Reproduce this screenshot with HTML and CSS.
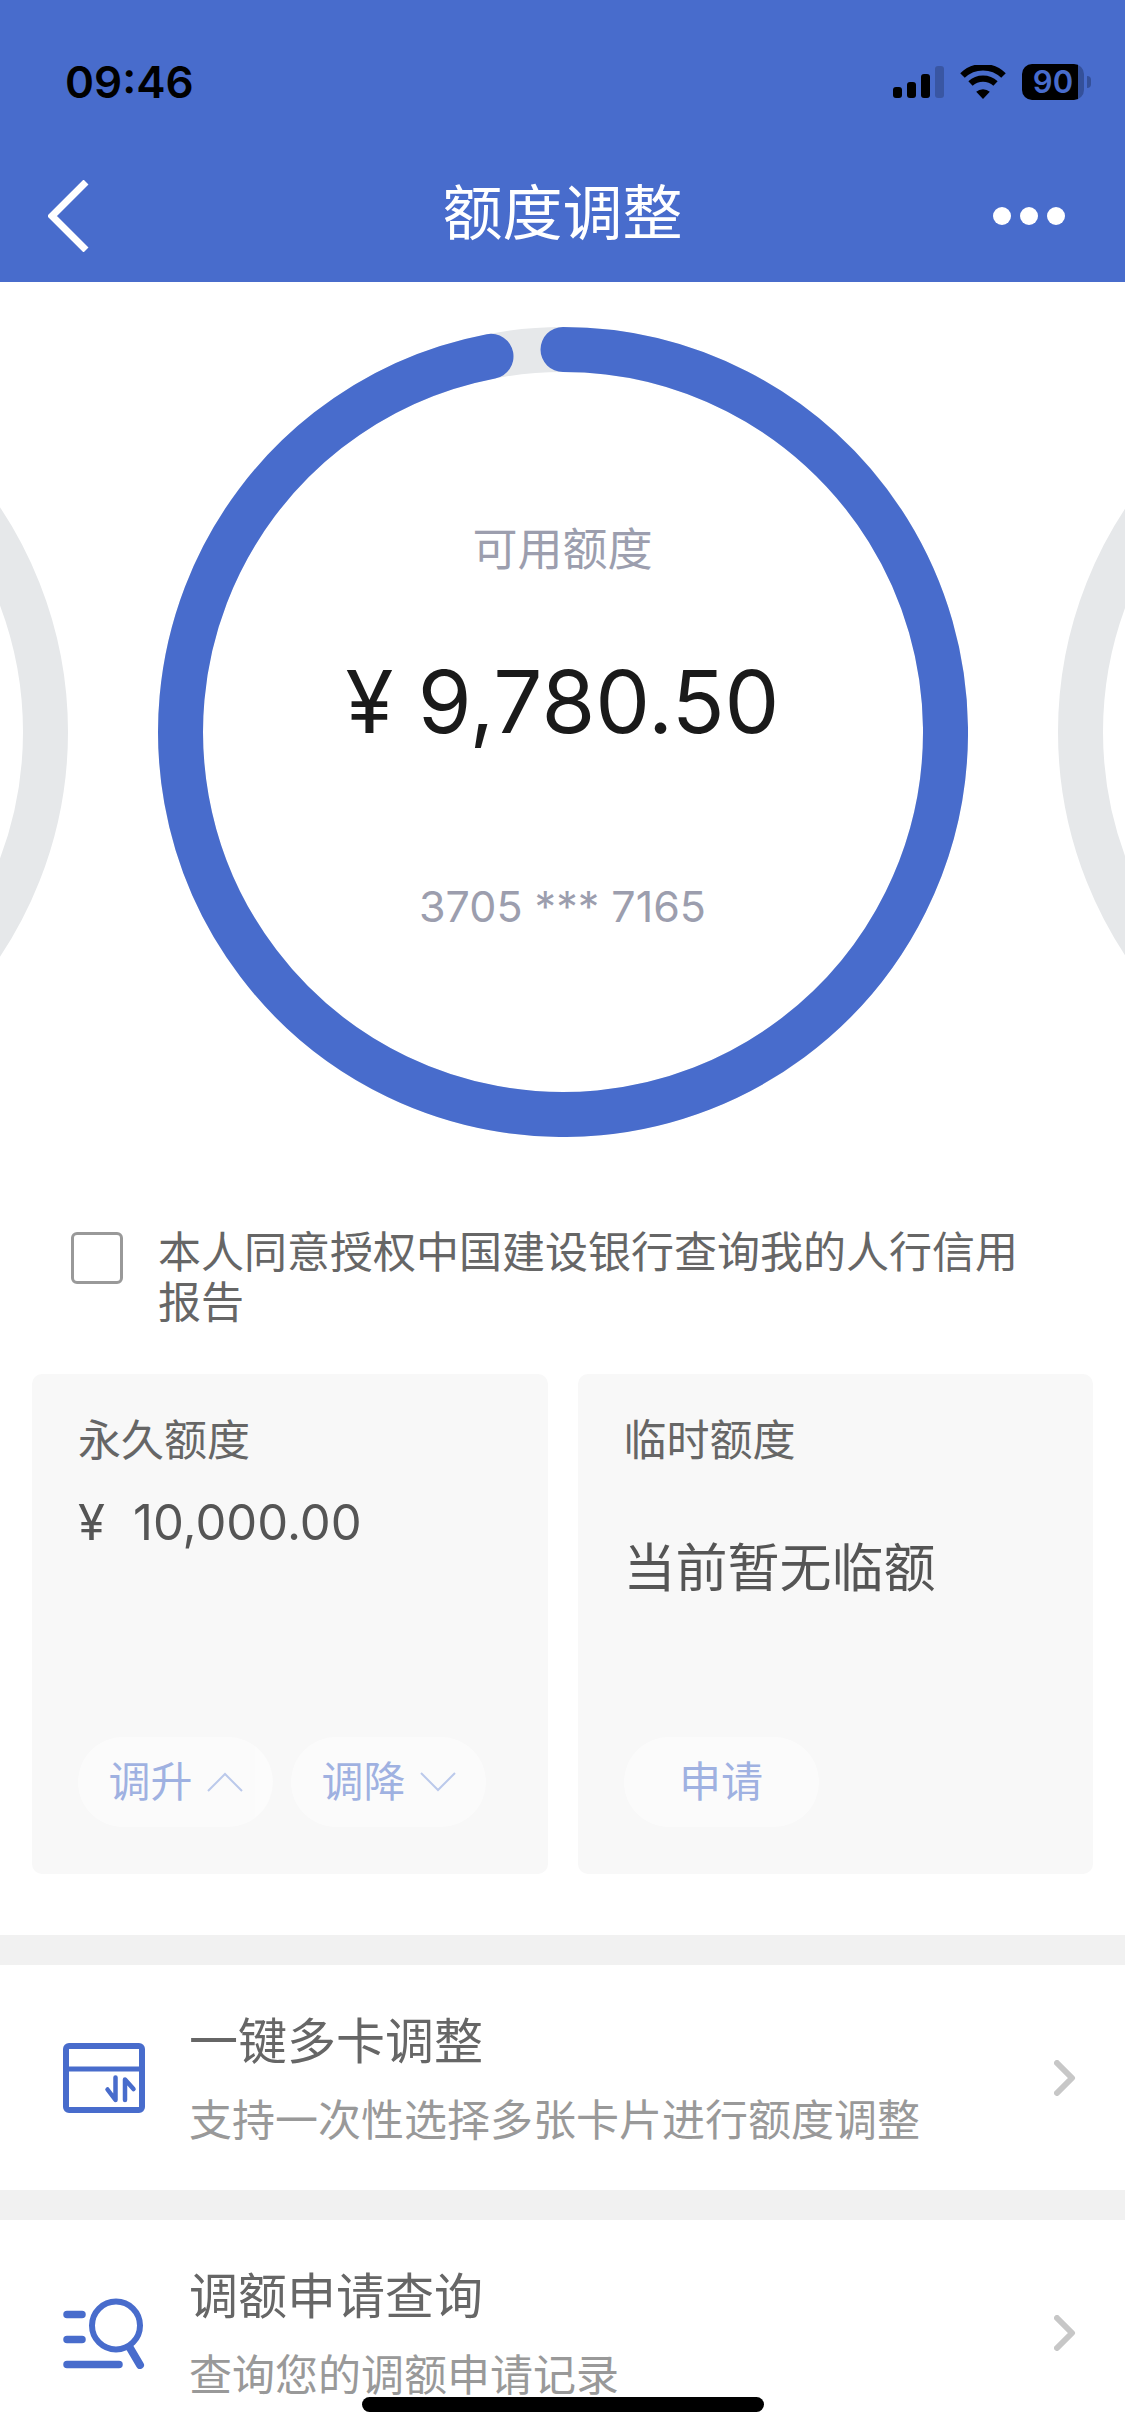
FILE: index.html
```html
<!DOCTYPE html>
<html lang="zh-CN">
<head>
<meta charset="utf-8">
<meta name="viewport" content="width=device-width, initial-scale=1">
<title>额度调整</title>
<link rel="stylesheet" href="styles.css">
</head>
<body>
<div class="app">
  <header class="header">
    <div class="status">
      <span class="status-time">09:46</span>
      <div class="status-icons">
        <svg class="signal" width="51" height="34" viewBox="0 0 51 34" aria-hidden="true">
          <rect x="0" y="22" width="9" height="11" rx="3"/>
          <rect x="14" y="17" width="9" height="16" rx="3"/>
          <rect x="28" y="9" width="9" height="24" rx="3"/>
          <rect x="42" y="1" width="9" height="32" rx="3" opacity=".2"/>
        </svg>
        <svg class="wifi" width="46" height="34" viewBox="0 0 46 34" aria-hidden="true">
          <path d="M2.5 10.500a29.500 29.500 0 0 1 41 0" fill="none" stroke="#000" stroke-width="6.500"/>
          <path d="M10.500 18.500a18.200 18.200 0 0 1 25 0" fill="none" stroke="#000" stroke-width="6.200"/>
          <path d="M23 34l-6.800-7.200a10 10 0 0 1 13.600 0z"/>
        </svg>
        <div class="battery"><span class="battery-body">90</span><span class="battery-tip"></span></div>
      </div>
    </div>
    <nav class="nav">
      <button class="nav-button" type="button" aria-label="返回">
        <svg width="42" height="72" viewBox="0 0 42 72" aria-hidden="true"><path d="M38 2L4 36l34 34" fill="none" stroke="#fff" stroke-width="7"/></svg>
      </button>
      <h1 class="nav-title">额度调整</h1>
      <button class="nav-button nav-more" type="button" aria-label="更多">
        <svg width="72" height="18" viewBox="0 0 72 18" fill="#fff" aria-hidden="true"><circle cx="9" cy="9" r="9"/><circle cx="36" cy="9" r="9"/><circle cx="63" cy="9" r="9"/></svg>
      </button>
    </nav>
  </header>

  <main class="content">
    <section class="carousel">
      <svg class="ring" viewBox="0 0 810 810" aria-hidden="true"><circle class="ring-track" cx="405" cy="405" r="382.500"/></svg>
      <div class="ring slide">
        <svg class="slide-ring" viewBox="0 0 810 810" aria-hidden="true">
          <circle class="ring-track" cx="405" cy="405" r="382.500"/>
          <path class="ring-value" d="M405 22.500A382.500 382.500 0 1 1 333 29.340"/>
        </svg>
        <div class="slide-text">
          <p class="slide-label">可用额度</p>
          <p class="slide-amount">¥ 9,780.50</p>
          <p class="slide-card">3705 *** 7165</p>
        </div>
      </div>
      <svg class="ring" viewBox="0 0 810 810" aria-hidden="true"><circle class="ring-track" cx="405" cy="405" r="382.500"/></svg>
    </section>

    <label class="consent">
      <input class="consent-box" type="checkbox">
      <span>本人同意授权中国建设银行查询我的人行信用报告</span>
    </label>

    <section class="limits">
      <article class="limit">
        <h2 class="limit-title">永久额度</h2>
        <p class="limit-amount"><span>¥</span><span>10,000.00</span></p>
        <div class="limit-actions">
          <button class="pill" type="button" disabled>调升
            <svg width="36" height="20" viewBox="0 0 36 20" aria-hidden="true"><path d="M1 19L18 2l17 17"/></svg>
          </button>
          <button class="pill" type="button" disabled>调降
            <svg width="36" height="20" viewBox="0 0 36 20" aria-hidden="true"><path d="M1 1l17 17L35 1"/></svg>
          </button>
        </div>
      </article>
      <article class="limit">
        <h2 class="limit-title">临时额度</h2>
        <p class="limit-empty">当前暂无临额</p>
        <div class="limit-actions">
          <button class="pill" type="button" disabled>申请</button>
        </div>
      </article>
    </section>

    <a class="entry" href="#multi">
      <svg class="entry-icon" width="82" height="70" viewBox="0 0 82 70" aria-hidden="true">
        <rect x="3" y="3" width="76" height="64" rx="3" stroke-width="6"/>
        <path d="M3 26h76" stroke-width="5"/>
        <path d="M52.500 34.500V57l-8-10.500M62 57V36.500l8.500 9.500" stroke-width="4.500"/>
      </svg>
      <span class="entry-text">
        <span class="entry-title">一键多卡调整</span>
        <span class="entry-note">支持一次性选择多张卡片进行额度调整</span>
      </span>
      <svg class="entry-arrow" width="22" height="36" viewBox="0 0 22 36" aria-hidden="true"><path d="M3 3l15 15L3 33"/></svg>
    </a>
    <a class="entry" href="#records">
      <svg class="entry-icon" width="82" height="72" viewBox="0 0 82 72" aria-hidden="true">
        <path d="M4 17.500h15M4 42.500h15M4 67.500h52" stroke-width="7.500"/>
        <circle cx="53" cy="28.500" r="24" stroke-width="6"/>
        <path d="M67 51l10 17" stroke-width="8"/>
      </svg>
      <span class="entry-text">
        <span class="entry-title">调额申请查询</span>
        <span class="entry-note">查询您的调额申请记录</span>
      </span>
      <svg class="entry-arrow" width="22" height="36" viewBox="0 0 22 36" aria-hidden="true"><path d="M3 3l15 15L3 33"/></svg>
    </a>
  </main>
  <div class="home-bar"></div>
</div>
</body>
</html>
```
FILE: styles.css
```css
* {
  box-sizing: border-box;
}

body,
h1,
h2,
p {
  margin: 0;
  font-weight: 400;
}

body {
  background: #fff;
  color: #666;
  font-family: Inter, "Noto Sans CJK SC", sans-serif;
  font-size: 43px;
  line-height: 60px;
}

button {
  padding: 0;
  border: 0;
  background: none;
  font: inherit;
}

svg {
  display: block;
  flex: none;
}

.app {
  display: flex;
  flex-direction: column;
  height: 100vh;
}

/* Header */
.header {
  flex: none;
  background: #486ccc;
}

.status {
  display: flex;
  align-items: center;
  justify-content: space-between;
  height: 150px;
  padding: 14px 34px 0 65px;
  color: #000;
}

.status-time {
  font-size: 44px;
  font-weight: 600;
}

.status-icons,
.battery {
  display: flex;
  align-items: center;
}

.status-icons {
  gap: 16px;
}

.battery {
  gap: 3px;
}

.battery-body {
  width: 62px;
  height: 36px;
  border-radius: 10px;
  background: linear-gradient(to right, #000 56px, #34509a 56px);
  color: #486ccc;
  font-size: 31px;
  font-weight: 600;
  line-height: 36px;
  text-align: center;
}

.battery-tip {
  width: 4px;
  height: 12px;
  border-radius: 0 6px 6px 0;
  background: #34509a;
}

.nav {
  display: grid;
  grid-template-columns: 1fr auto 1fr;
  align-items: center;
  height: 132px;
  padding: 0 48px;
}

.nav-button {
  justify-self: start;
}

.nav-more {
  justify-self: end;
  margin-right: 12px;
}

.nav-title {
  padding-bottom: 6px;
  color: #fff;
  font-size: 60px;
  line-height: 80px;
}

/* Scrolling content */
.content {
  flex: 1;
  min-height: 0;
  overflow-y: auto;
  scrollbar-width: none;
}

.carousel {
  display: flex;
  justify-content: center;
  gap: 8%;
  padding: 45px 0 90px;
  overflow: hidden;
}

.ring {
  flex: none;
  width: 72%;
  aspect-ratio: 1;
}

.ring-track,
.ring-value {
  fill: none;
  stroke: #e6e8ea;
  stroke-width: 45;
}

.ring-value {
  stroke: #486ccc;
  stroke-linecap: round;
}

.slide {
  display: grid;
}

.slide-ring,
.slide-text {
  grid-area: 1 / 1;
}

.slide-text {
  padding-top: 193px;
  color: #9c9eae;
  text-align: center;
}

.slide-label {
  font-size: 45px;
}

.slide-amount {
  margin: 67px 0 119px;
  color: #1a1a1a;
  font-size: 87px;
  line-height: 110px;
}

.consent {
  display: flex;
  gap: 35px;
  padding: 0 71px;
  line-height: 50px;
}

.consent-box {
  flex: none;
  width: 52px;
  height: 52px;
  margin: 5px 0 0;
  border: 3px solid #999;
  border-radius: 6px;
  appearance: none;
}

.consent-box:checked {
  background: #486ccc;
}

/* Limit cards */
.limits {
  display: grid;
  grid-template-columns: 1fr 1fr;
  gap: 30px;
  padding: 47px 32px 61px;
}

.limit {
  display: flex;
  flex-direction: column;
  min-height: 500px;
  padding: 36px 46px 47px;
  border-radius: 10px;
  background: #f8f8f8;
}

.limit-title {
  font-size: 43px;
}

.limit-amount,
.limit-empty {
  color: #555;
}

.limit-amount {
  display: flex;
  gap: 28px;
  margin-top: 23px;
  font-size: 49px;
}

.limit-empty {
  margin-top: 69px;
  font-size: 52px;
}

.limit-actions {
  display: flex;
  gap: 18px;
  margin-top: auto;
}

.pill {
  display: flex;
  align-items: center;
  justify-content: center;
  gap: 14px;
  width: 195px;
  height: 90px;
  border-radius: 45px;
  background: #fff;
  color: #486ccc;
  font-size: 42px;
}

.pill:disabled {
  opacity: .5;
}

.pill path {
  fill: none;
  stroke: #7f9ce0;
  stroke-width: 2;
}

/* Entry links */
.entry {
  display: flex;
  align-items: center;
  gap: 44px;
  height: 255px;
  padding: 0 49px 0 63px;
  border-top: 30px solid #f1f1f1;
  color: #999;
  text-decoration: none;
}

.entry-icon {
  fill: none;
  stroke: #486ccc;
  stroke-linecap: round;
  stroke-linejoin: round;
}

.entry-text {
  display: flex;
  flex: 1;
  flex-direction: column;
  gap: 18px;
  padding-top: 6px;
}

.entry-title {
  color: #666;
  font-size: 49px;
}

.entry-arrow {
  fill: none;
  stroke: #c7c7c7;
  stroke-width: 6;
  stroke-linecap: round;
  stroke-linejoin: round;
}

.home-bar {
  position: fixed;
  bottom: 24px;
  left: 50%;
  width: 402px;
  height: 15px;
  margin-left: -201px;
  border-radius: 8px;
  background: #000;
}
```
